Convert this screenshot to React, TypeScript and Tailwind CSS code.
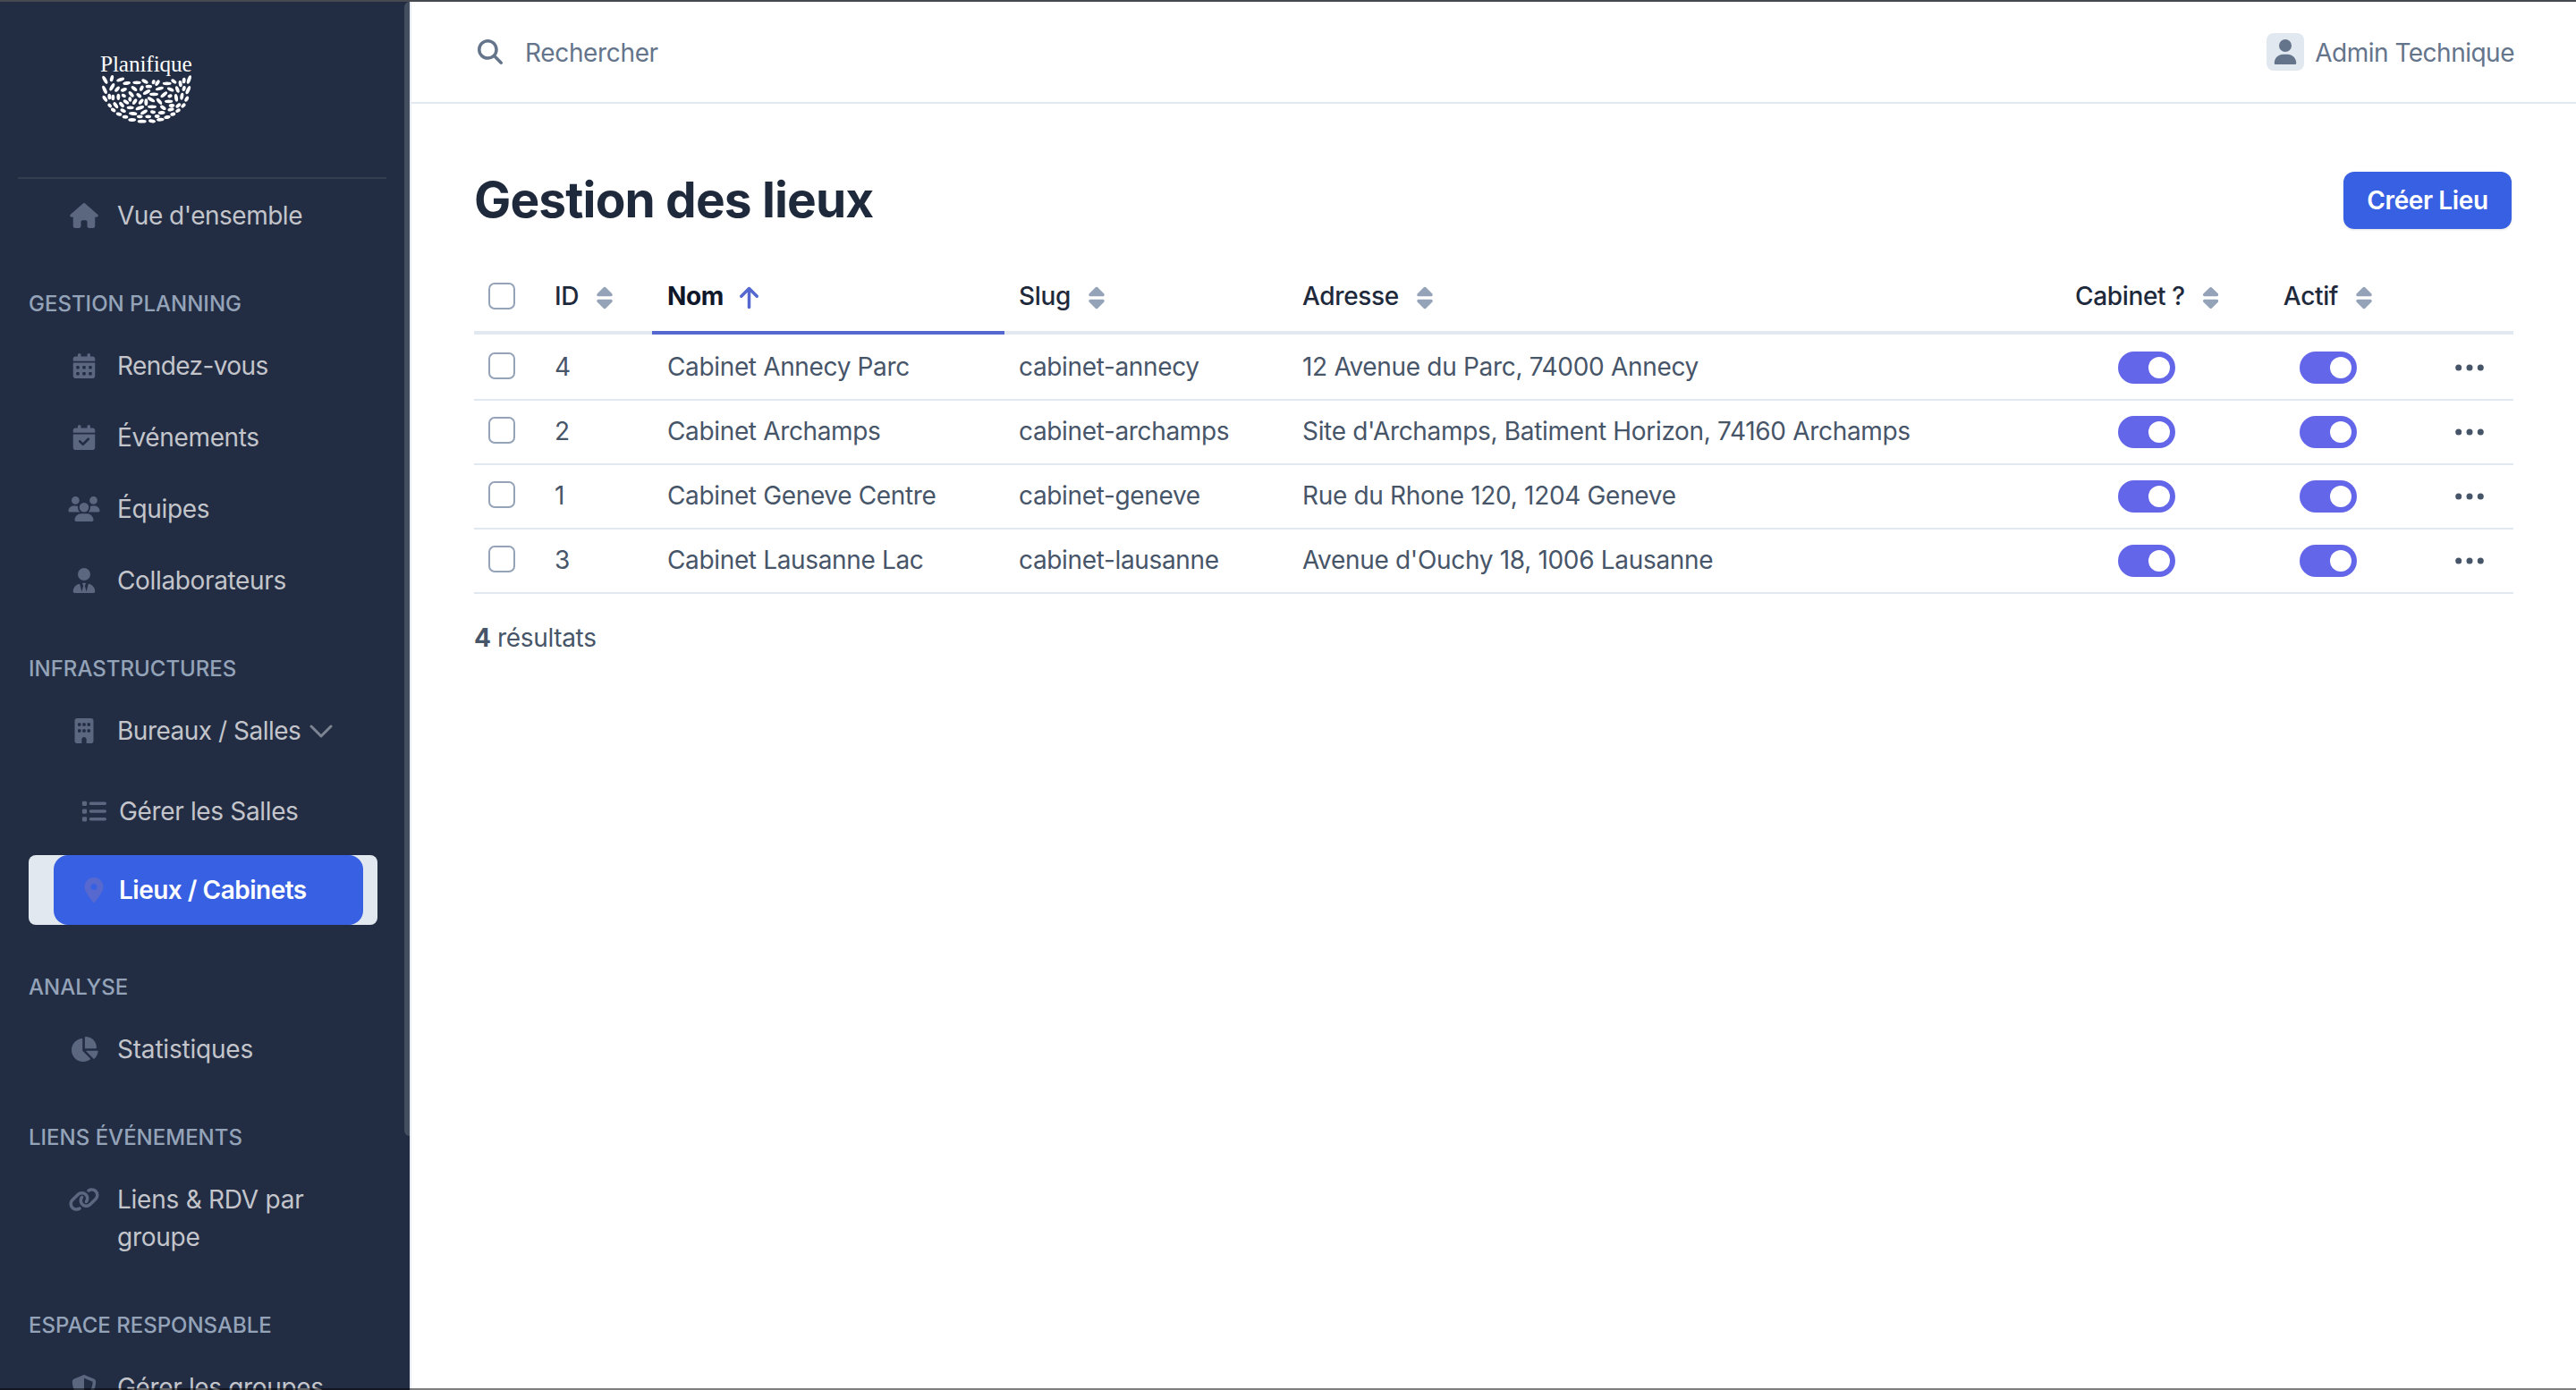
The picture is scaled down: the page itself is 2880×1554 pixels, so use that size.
import type { ReactNode } from 'react';
import type { IconType } from 'react-icons';
import {
    FaArrowUp,
    FaBuilding,
    FaCalendarCheck,
    FaCalendarDays,
    FaChartPie,
    FaHouse,
    FaLink,
    FaList,
    FaLocationDot,
    FaMagnifyingGlass,
    FaShieldHalved,
    FaSort,
    FaUser,
    FaUsers,
    FaUserTie,
} from 'react-icons/fa6';
import clsx from 'clsx';

// cx, cy, rx, rotation
const LEAVES: [number, number, number, number][] = [
    [352, 268, 15, 60], [375, 263, 11, -75], [404, 267, 14, -20], [425, 279, 13, -10], [459, 277, 14, 0],
    [486, 273, 12, 30], [515, 275, 8, -70], [528, 278, 11, -55], [560, 280, 15, 0], [583, 273, 10, 35],
    [605, 281, 11, 80], [617, 270, 10, -85], [634, 267, 15, -70],
    [351, 301, 15, 65], [376, 292, 14, -60], [393, 299, 11, -50], [415, 301, 11, -20], [450, 297, 12, 40],
    [475, 296, 10, -65], [499, 290, 11, 0], [492, 309, 14, -30], [535, 297, 14, -15], [572, 300, 12, 25],
    [595, 300, 12, 70], [617, 297, 9, -75], [631, 302, 15, -65],
    [352, 331, 12, 55], [367, 324, 10, 85], [379, 327, 10, 90], [397, 325, 11, 90], [415, 321, 8, 25],
    [440, 316, 12, 50], [466, 320, 10, 40], [516, 316, 15, 0], [550, 317, 14, -40], [570, 322, 8, -15],
    [591, 328, 13, 80], [610, 323, 12, -80], [626, 332, 10, -60],
    [368, 354, 8, 45], [388, 353, 12, 55], [408, 351, 11, 50], [423, 342, 11, 35], [436, 333, 8, 80],
    [452, 341, 11, -55], [473, 341, 11, -50], [490, 343, 12, 90], [507, 334, 14, 30], [534, 340, 13, 50],
    [566, 340, 14, 0], [598, 354, 10, -40], [615, 354, 9, -45],
    [380, 369, 9, 30], [413, 371, 10, 25], [437, 361, 12, 0], [469, 362, 15, -20], [510, 358, 15, 0],
    [547, 361, 11, 35], [576, 354, 10, -5], [573, 367, 11, -15], [597, 371, 9, -30],
    [399, 383, 10, 15], [446, 381, 14, 5], [483, 376, 13, -30], [513, 376, 9, 10], [542, 378, 12, -5],
    [580, 383, 9, -15],
    [420, 392, 10, 5], [469, 391, 10, 0], [497, 391, 10, 0], [527, 390, 9, 5], [561, 393, 11, -10],
    [443, 402, 13, 0], [476, 407, 15, 0], [510, 406, 12, 10], [538, 401, 13, -5],
];

const LIEUX = [
    { id: 4, nom: 'Cabinet Annecy Parc', slug: 'cabinet-annecy', adresse: '12 Avenue du Parc, 74000 Annecy' },
    { id: 2, nom: 'Cabinet Archamps', slug: 'cabinet-archamps', adresse: "Site d'Archamps, Batiment Horizon, 74160 Archamps" },
    { id: 1, nom: 'Cabinet Geneve Centre', slug: 'cabinet-geneve', adresse: 'Rue du Rhone 120, 1204 Geneve' },
    { id: 3, nom: 'Cabinet Lausanne Lac', slug: 'cabinet-lausanne', adresse: "Avenue d'Ouchy 18, 1006 Lausanne" },
];

function Logo() {
    return (
        <svg viewBox="336 165 309 252" className="w-[103px] h-[84px] overflow-visible fill-white">
            <text
                x="336"
                y="240"
                fontSize="78"
                textLength="308"
                lengthAdjust="spacingAndGlyphs"
                fontFamily="'Liberation Serif', serif"
            >
                Planifique
            </text>
            {LEAVES.map(([cx, cy, rx, angle]) => (
                <ellipse
                    key={`${cx}-${cy}`}
                    cx={cx}
                    cy={cy}
                    rx={rx}
                    ry={5.8}
                    transform={`rotate(${angle} ${cx} ${cy})`}
                />
            ))}
        </svg>
    );
}

function NavItem({ icon: Icon, className, children }: { icon: IconType; className?: string; children: ReactNode }) {
    return (
        <a className="flex items-start pl-[76px] pr-12 pt-5 pb-[18px] leading-[42px] text-[#c3c5cb]">
            <span className="flex w-9 h-[42px] items-center justify-center mr-[19px] shrink-0 text-[#5a677f]">
                <Icon className="h-7 w-9" />
            </span>
            <span className={clsx('flex-1', className)}>{children}</span>
        </a>
    );
}

function NavSubItem({ icon: Icon, active, children }: { icon: IconType; active?: boolean; children: ReactNode }) {
    return (
        <div className={clsx('ml-8 mr-[30px] mb-2.5 pl-7 pr-4 rounded-lg', active && 'bg-[#e2e8f0]')}>
            <a
                className={clsx(
                    'flex items-center h-[78px] pl-[31px] rounded-2xl',
                    active ? 'bg-[#3860e2] text-white font-semibold tracking-[-0.5px]' : 'text-[#c3c5cb]'
                )}
            >
                <span className={clsx('flex w-7 justify-center mr-3.5', active ? 'text-[#5769cf]' : 'text-[#5a677f]')}>
                    <Icon className="h-7 w-7" />
                </span>
                {children}
            </a>
        </div>
    );
}

function NavSection({ children }: { children: ReactNode }) {
    return (
        <div className="h-[88px] pl-8 pt-[42px] text-2xl leading-9 font-medium tracking-normal text-[#94a3b8] uppercase">
            {children}
        </div>
    );
}

function Sidebar() {
    return (
        <aside className="w-[460px] shrink-0 flex bg-[#222d44] border-r-2 border-[#e9ecf3] overflow-hidden">
            <div className="w-[452px] shrink-0">
                <div className="h-[196px] pl-[112px] pt-[53px]">
                    <Logo />
                </div>
                <hr className="ml-5 mr-5 border-t-2 border-[#333f50]" />
                <nav>
                    <NavItem icon={FaHouse} className="tracking-[-0.5px]">
                        Vue d'ensemble
                    </NavItem>
                    <NavSection>Gestion planning</NavSection>
                    <NavItem icon={FaCalendarDays} className="tracking-[-0.6px]">
                        Rendez-vous
                    </NavItem>
                    <NavItem icon={FaCalendarCheck}>Événements</NavItem>
                    <NavItem icon={FaUsers}>Équipes</NavItem>
                    <NavItem icon={FaUserTie}>Collaborateurs</NavItem>
                    <NavSection>Infrastructures</NavSection>
                    <NavItem icon={FaBuilding} className="tracking-[-0.5px]">
                        <span className="flex items-center gap-2.5 whitespace-nowrap">
                            Bureaux / Salles
                            <svg viewBox="0 0 26 16" className="w-[26px] h-4 mt-0.5 fill-none stroke-[#7c8492]">
                                <path d="M2 2l11 11L24 2" strokeWidth="3" strokeLinecap="round" strokeLinejoin="round" />
                            </svg>
                        </span>
                    </NavItem>
                    <div className="pt-3">
                        <NavSubItem icon={FaList}>Gérer les Salles</NavSubItem>
                        <NavSubItem icon={FaLocationDot} active>
                            Lieux / Cabinets
                        </NavSubItem>
                    </div>
                    <NavSection>Analyse</NavSection>
                    <NavItem icon={FaChartPie} className="tracking-[-0.2px]">
                        Statistiques
                    </NavItem>
                    <NavSection>Liens événements</NavSection>
                    <NavItem icon={FaLink} className="tracking-[-0.25px]">
                        Liens & RDV par groupe
                    </NavItem>
                    <NavSection>Espace responsable</NavSection>
                    <NavItem icon={FaShieldHalved} className="whitespace-nowrap">
                        Gérer les groupes
                    </NavItem>
                </nav>
            </div>
            {/* Scrollbar thumb */}
            <div className="w-1.5 h-[1268px] shrink-0 rounded-l-md bg-[#434e5f]" />
        </aside>
    );
}

function SortableHeader({ label, className }: { label: string; className?: string }) {
    return (
        <div className={clsx('flex items-center whitespace-nowrap', className)}>
            {label}
            <FaSort className="h-7 w-[18px] ml-5 mt-1 text-[#94a3b8]" />
        </div>
    );
}

function Checkbox() {
    return <span className="block w-[30px] h-[30px] rounded-[7px] border-2 border-[#94a3b8] bg-white" />;
}

function Toggle() {
    return (
        <span className="flex items-center justify-end w-16 h-9 mx-auto pr-1.5 rounded-full bg-[#6366e8]">
            <span className="w-6 h-6 rounded-full bg-white" />
        </span>
    );
}

function LieuxTable() {
    return (
        <table className="w-[2280px] table-fixed border-separate border-spacing-0 text-left">
            <colgroup>
                <col className="w-[74px]" />
                <col className="w-[125px]" />
                <col className="w-[394px]" />
                <col className="w-[317px]" />
                <col className="w-[864px]" />
                <col className="w-[192px]" />
                <col className="w-[213px]" />
                <col className="w-[101px]" />
            </colgroup>
            <thead>
                <tr className="h-[86px] text-[#1e293b] *:font-medium *:px-4 *:pt-1 *:border-b-4 *:border-[#e2e8f0]">
                    <th>
                        <Checkbox />
                    </th>
                    <th>
                        <SortableHeader label="ID" />
                    </th>
                    <th className="border-[#5568d0]!">
                        <div className="flex items-center pl-px font-bold text-[#0f172a]">
                            Nom
                            <FaArrowUp className="h-7 w-[21px] ml-[18px] mt-1 text-[#5568d0]" />
                        </div>
                    </th>
                    <th>
                        <SortableHeader label="Slug" />
                    </th>
                    <th>
                        <SortableHeader label="Adresse" />
                    </th>
                    <th>
                        <SortableHeader label="Cabinet ?" />
                    </th>
                    <th>
                        <SortableHeader label="Actif" className="justify-center" />
                    </th>
                    <th />
                </tr>
            </thead>
            <tbody>
                {LIEUX.map((lieu) => (
                    <tr
                        key={lieu.id}
                        className="h-[72px] first:h-[74px] text-[#475569] *:px-4 *:border-b-2 *:border-[#e2e8f0] first:*:pt-0.5"
                    >
                        <td className="pb-1">
                            <Checkbox />
                        </td>
                        <td className="pb-0.5">{lieu.id}</td>
                        <td className="pb-0.5">
                            <span className="pl-px">{lieu.nom}</span>
                        </td>
                        <td className="pb-0.5">{lieu.slug}</td>
                        <td className="pb-0.5 tracking-[-0.32px]">{lieu.adresse}</td>
                        <td>
                            <Toggle />
                        </td>
                        <td>
                            <Toggle />
                        </td>
                        <td>
                            <svg viewBox="0 0 32 8" className="w-8 h-2 ml-5 fill-[#475569]">
                                <circle cx="3.7" cy="4" r="3.5" />
                                <circle cx="16" cy="4" r="3.5" />
                                <circle cx="28.3" cy="4" r="3.5" />
                            </svg>
                        </td>
                    </tr>
                ))}
            </tbody>
        </table>
    );
}

export default function App() {
    return (
        <div className="relative flex w-[2880px] h-[1554px] overflow-hidden bg-white border-t-2 border-[#46494f] font-['Inter',sans-serif] text-[28px] leading-[42px] tracking-[-0.35px]">
            <Sidebar />
            <main className="flex-1">
                {/* Top bar */}
                <header className="flex items-center justify-between h-[114px] pl-[74px] pr-[71px] border-b-2 border-[#e2e8f0] text-[#64748b]">
                    <div className="flex items-center">
                        <FaMagnifyingGlass className="w-7 h-7" />
                        <span className="ml-[25px] pt-px">Rechercher</span>
                    </div>
                    <div className="flex items-center">
                        <span className="flex items-center justify-center w-[42px] h-[42px] mr-3 rounded-lg bg-[#e2e8f0]">
                            <FaUser className="h-7 w-7" />
                        </span>
                        <span className="pt-px tracking-[-0.5px]">Admin Technique</span>
                    </div>
                </header>

                <section className="pl-[70px] pr-[72px] pt-[76px]">
                    <div className="flex items-center justify-between h-16 mb-8">
                        <h1 className="text-[55px] leading-[64px] pb-0.5 font-bold tracking-[-0.85px] text-[#1e293b]">
                            Gestion des lieux
                        </h1>
                        <button className="h-16 w-[188px] mr-0.5 rounded-xl bg-[#3860e2] font-semibold tracking-[-0.4px] text-white shadow-sm">
                            Créer Lieu
                        </button>
                    </div>
                    <LieuxTable />
                    <p className="mt-7 text-[#475569]">
                        <strong className="font-bold">4</strong> résultats
                    </p>
                </section>
            </main>
            <div className="absolute inset-x-0 bottom-0 h-0.5 bg-black/50" />
        </div>
    );
}
